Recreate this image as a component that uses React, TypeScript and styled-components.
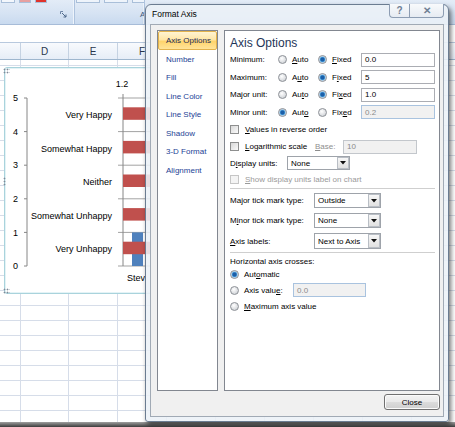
import React from 'react'
import styled, { createGlobalStyle, css } from 'styled-components'

const GlobalStyle = createGlobalStyle`
  html, body { margin: 0; padding: 0; }
  body {
    width: 455px;
    height: 427px;
    overflow: hidden;
    background: #fff;
    font-family: "Liberation Sans", Arial, sans-serif;
  }
  * { box-sizing: border-box; }
`

const Page = styled.div`
  position: relative;
  width: 455px;
  height: 427px;
  overflow: hidden;
  display: flex;
  flex-direction: column;
`

/* ---------- excel sheet behind ---------- */

const Ribbon = styled.div`
  height: 25px;
  flex-shrink: 0;
  display: flex;
  background: linear-gradient(#e3ecf7, #d6e3f3 55%, #c9daef);
  border-bottom: 1px solid #a7bcd8;
`

const RibbonGroup = styled.div<{ $w: number }>`
  width: ${p => p.$w}px;
  flex-shrink: 0;
  display: flex;
  flex-direction: column;
  overflow: hidden;
  border-right: 1px solid #aec3de;
  box-shadow: inset -1px 0 0 #eef4fb;
`

const ButtonTips = styled.div`
  height: 6px;
  display: flex;
  gap: 4px;
  padding: 0 1px;
`

const ButtonTip = styled.div<{ $w: number; $c: string }>`
  width: ${p => p.$w}px;
  height: 3px;
  flex-shrink: 0;
  background: ${p => p.$c};
  border: 1px solid #a9bfd9;
  border-top: none;
`

const GroupLabel = styled.div<{ $align: string; $indent: number }>`
  flex: 1;
  display: flex;
  align-items: center;
  justify-content: ${p => p.$align};
  padding: 0 7px 2px ${p => p.$indent}px;
  font-size: 8px;
  color: #3e5a80;
  white-space: nowrap;
`

const Strip = styled.div`
  height: 18px;
  flex-shrink: 0;
  background: #fff;
  border-bottom: 1px solid #b8c9de;
`

const HeaderRow = styled.div`
  height: 17px;
  flex-shrink: 0;
  display: flex;
  background: linear-gradient(#f8fafd, #e6edf7);
  border-bottom: 1px solid #9eb6ce;
`

const ColHeader = styled.div<{ $w: number }>`
  width: ${p => p.$w}px;
  flex-shrink: 0;
  display: flex;
  align-items: center;
  justify-content: center;
  border-right: 1px solid #c5d2e2;
  font-size: 10px;
  color: #27364b;
`

const Grid = styled.div`
  flex: 1;
  display: flex;
`

const GridColumn = styled.div<{ $w: number }>`
  width: ${p => p.$w}px;
  flex-shrink: 0;
  border-right: 1px solid #d6dde9;
  background-image: linear-gradient(to bottom, transparent 14px, #d6dde9 14px);
  background-size: 100% 15px;
  background-position: 0 -9px;
`

const BottomEdge = styled.div`
  height: 5px;
  flex-shrink: 0;
  background: linear-gradient(#a0a0a0, #3c3c3c);
`

/* ---------- floating chart ---------- */

const ChartFrame = styled.div`
  position: absolute;
  left: 4px;
  top: 67px;
  width: 150px;
  height: 227px;
  background: #fff;
  border: 1px solid #a9d3dc;
  box-shadow: inset 0 0 0 1px #e4f3f6;
  border-radius: 3px;
`

const ChartText = styled.text`
  font-family: "Liberation Sans", Arial, sans-serif;
  font-size: 9px;
  fill: #000;
`

const Handle = styled.span<{ $top: number; $left: number; $w: number; $h: number }>`
  position: absolute;
  top: ${p => p.$top}px;
  left: ${p => p.$left}px;
  width: ${p => p.$w}px;
  height: ${p => p.$h}px;
  background-image: radial-gradient(circle, #7d8a98 0.8px, transparent 1.1px);
  background-size: 3px 3px;
`

/* ---------- dialog ---------- */

const Dialog = styled.div`
  position: absolute;
  left: 145px;
  top: 4px;
  width: 304px;
  height: 418px;
  display: flex;
  flex-direction: column;
  padding: 0 4px 4px 4px;
  border: 1px solid #6b7c91;
  border-radius: 6px 6px 3px 3px;
  background: rgba(236, 241, 247, 0.88);
  box-shadow: 2px 3px 5px rgba(0, 0, 0, 0.55);
  font-size: 8px;
  color: #000;
`

const TitleBar = styled.div`
  height: 19px;
  display: flex;
  align-items: center;
  padding-bottom: 2px;
`

const Title = styled.span`
  margin-left: 2px;
  font-size: 8.5px;
`

const TitleButtons = styled.div`
  margin-left: auto;
  align-self: flex-start;
  margin-top: -1px;
  display: flex;
`

const TitleButton = styled.div<{ $w: number; $first?: boolean }>`
  width: ${p => p.$w}px;
  height: 14px;
  display: flex;
  align-items: center;
  justify-content: center;
  border: 1px solid #8d9db3;
  border-top: none;
  ${p => p.$first ? css`border-right: none; border-radius: 0 0 0 4px;` : css`border-radius: 0 0 4px 0;`}
  background: linear-gradient(#f8fafc, #e6ebf2);
  color: #6f7f95;
  font-size: 10px;
  font-weight: bold;
`

const Client = styled.div`
  flex: 1;
  display: flex;
  flex-direction: column;
  background: #f0f0f0;
  border: 1px solid #a1aab5;
  padding: 5px 3px 6px 6px;
`

const Body = styled.div`
  height: 361px;
  display: flex;
  gap: 6px;
`

const NavList = styled.div`
  width: 61px;
  flex-shrink: 0;
  display: flex;
  flex-direction: column;
  background: #fff;
  border: 1px solid #828790;
`

const NavItem = styled.div<{ $active?: boolean }>`
  height: 18.5px;
  display: flex;
  align-items: center;
  padding-left: 7px;
  border: 1px solid transparent;
  color: #1d3f95;
  white-space: nowrap;
  ${p => p.$active && css`
    height: 19px;
    color: #1b2a55;
    border-color: #e2b24d;
    border-radius: 2px;
    background: linear-gradient(#fff4d3, #ffe6a6 45%, #ffd46c 55%, #ffe49a);
  `}
`

const Panel = styled.div`
  flex: 1;
  display: flex;
  flex-direction: column;
  background: #fff;
  border: 1px solid #828790;
  padding: 5px 4px 0 5px;
`

const Heading = styled.div`
  height: 15px;
  line-height: 15px;
  font-size: 12px;
  color: #1e3558;
`

const AxisRow = styled.div`
  height: 17.5px;
  display: grid;
  grid-template-columns: 48px 40px 43px 74px;
  align-items: center;
`

const Row = styled.div<{ $h: number }>`
  height: ${p => p.$h}px;
  display: flex;
  align-items: center;
`

const FieldLabel = styled.span<{ $w: number; $muted?: boolean }>`
  width: ${p => p.$w}px;
  flex-shrink: 0;
  color: ${p => (p.$muted ? '#8d8d8d' : '#000')};
  white-space: nowrap;
`

const Option = styled.span<{ $w?: number; $gap: number; $muted?: boolean }>`
  display: inline-flex;
  align-items: center;
  gap: ${p => p.$gap}px;
  white-space: nowrap;
  ${p => p.$w && css`width: ${p.$w}px; flex-shrink: 0;`}
  color: ${p => (p.$muted ? '#9a9a9a' : '#000')};
`

const Radio = styled.span<{ $on?: boolean }>`
  width: 9px;
  height: 9px;
  flex-shrink: 0;
  border-radius: 50%;
  border: 1px solid #8c9096;
  background: ${p =>
    p.$on
      ? 'radial-gradient(circle at 50% 50%, #1c5fa8 0 1.6px, #58ace6 2.6px, #dfe6ee 3.3px, #c3c8ce 100%)'
      : 'radial-gradient(circle at 40% 35%, #ffffff, #d3d6da 75%)'};
`

const Check = styled.span<{ $muted?: boolean }>`
  width: 9px;
  height: 9px;
  flex-shrink: 0;
  border: 1px solid ${p => (p.$muted ? '#c6c6c6' : '#8e8f8f')};
  background: ${p => (p.$muted ? '#f4f4f4' : 'linear-gradient(135deg, #d8d8d8, #fbfbfb)')};
`

const TextBox = styled.div<{ $w: number; $off?: boolean; $blue?: boolean }>`
  width: ${p => p.$w}px;
  height: 14px;
  flex-shrink: 0;
  display: flex;
  align-items: center;
  padding-left: 3px;
  border: 1px solid ${p => (p.$blue ? '#a9c3df' : p.$off ? '#c3c7cc' : '#abadb3')};
  background: ${p => (p.$off ? '#f1f1f1' : '#fff')};
  color: ${p => (p.$off ? '#8a8a8a' : '#000')};
`

const Select = styled.div<{ $w: number; $h: number }>`
  width: ${p => p.$w}px;
  height: ${p => p.$h}px;
  flex-shrink: 0;
  display: flex;
  align-items: stretch;
  border: 1px solid #9ea3aa;
  background: #fff;
`

const SelectValue = styled.span`
  flex: 1;
  display: flex;
  align-items: center;
  padding-left: 3px;
`

const DropButton = styled.span`
  width: 12px;
  display: flex;
  align-items: center;
  justify-content: center;
  border: 1px solid #b9bec5;
  background: linear-gradient(#f7f7f7, #e1e1e1);
`

const Divider = styled.div`
  height: 1px;
  margin: 1px 0 2px;
  background: #cfcfcf;
`

const Key = styled.span`
  text-decoration: underline;
`

const Footer = styled.div`
  margin-top: 3px;
  display: flex;
  justify-content: flex-end;
`

const CloseButton = styled.div`
  width: 56px;
  height: 16px;
  display: flex;
  align-items: center;
  justify-content: center;
  border: 1px solid #707070;
  border-radius: 3px;
  background: linear-gradient(#f3f3f3, #e9e9e9 50%, #dcdcdc 51%, #cfcfcf);
  box-shadow: inset 0 0 0 1px #fbfbfb;
`

/* ---------- data ---------- */

// only D, E and F show beside the dialog; the rest sit under it
const columns = [
  { w: 21, l: '' },
  { w: 48, l: 'D' },
  { w: 49, l: 'E' },
  { w: 49, l: 'F' },
  { w: 49, l: '' },
  { w: 49, l: '' },
  { w: 49, l: '' },
  { w: 49, l: '' },
  { w: 49, l: '' },
  { w: 49, l: '' },
]

const navItems = ['Axis Options', 'Number', 'Fill', 'Line Color', 'Line Style', 'Shadow', '3-D Format', 'Alignment']

const categories = ['Very Unhappy', 'Somewhat Unhappy', 'Neither', 'Somewhat Happy', 'Very Happy']

const Y0 = 266
const STEP = 33.6
const yOf = (v: number) => Y0 - v * STEP

const Arrow = () => (
  <svg width="6" height="4" viewBox="0 0 6 4">
    <path d="M0 0 H6 L3 3.5 Z" fill="#111" />
  </svg>
)

const Launcher = () => (
  <svg width="7" height="7" viewBox="0 0 7 7">
    <path d="M0.5 3 V0.5 H3" stroke="#6f86a6" fill="none" />
    <path d="M2 2 L6 6 M6 3.5 V6 H3.5" stroke="#4d6788" fill="none" />
  </svg>
)

const Chart = () => (
  <ChartFrame>
    <svg width={148} height={225} viewBox="5 68 148 225" style={{ display: 'block' }}>
      {[0, 1, 2, 3, 4, 5].map(v => (
        <g key={v}>
          <line x1={24} x2={27} y1={yOf(v)} y2={yOf(v)} stroke="#868686" />
          <line x1={118} x2={153} y1={yOf(v)} y2={yOf(v)} stroke="#a3a3a3" />
          <ChartText x={18} y={yOf(v) + 3.2} textAnchor="end">{v}</ChartText>
        </g>
      ))}
      <line x1={27} x2={27} y1={yOf(5)} y2={Y0} stroke="#868686" />
      <line x1={123} x2={123} y1={94} y2={Y0} stroke="#868686" />
      <ChartText x={122} y={87} textAnchor="middle">1.2</ChartText>
      <rect x={132} y={yOf(1)} width={11} height={STEP} fill="#4f81bd" />
      {categories.map((c, i) => {
        const cy = Y0 - (i + 0.5) * STEP
        return (
          <g key={c}>
            <ChartText x={112} y={cy + 3.2} textAnchor="end">{c}</ChartText>
            <rect x={123} y={cy - 7.5} width={30} height={12.5} fill="#c0504d" />
          </g>
        )
      })}
      <ChartText x={127} y={281}>Stev</ChartText>
    </svg>
  </ChartFrame>
)

const FormatAxisDialog = () => (
  <Dialog>
    <TitleBar>
      <Title>Format Axis</Title>
      <TitleButtons>
        <TitleButton $w={20} $first>?</TitleButton>
        <TitleButton $w={35}>✕</TitleButton>
      </TitleButtons>
    </TitleBar>
    <Client>
      <Body>
        <NavList>
          {navItems.map((n, i) => (
            <NavItem key={n} $active={i === 0}>{n}</NavItem>
          ))}
        </NavList>
        <Panel>
          <Heading>Axis Options</Heading>
          <AxisRow>
            <span>Minimum:</span>
            <Option $gap={5}><Radio /><span><Key>A</Key>uto</span></Option>
            <Option $gap={5}><Radio $on /><span><Key>F</Key>ixed</span></Option>
            <TextBox $w={74}>0.0</TextBox>
          </AxisRow>
          <AxisRow>
            <span>Maximum:</span>
            <Option $gap={5}><Radio /><span>A<Key>u</Key>to</span></Option>
            <Option $gap={5}><Radio $on /><span>F<Key>i</Key>xed</span></Option>
            <TextBox $w={74}>5</TextBox>
          </AxisRow>
          <AxisRow>
            <span>Major unit:</span>
            <Option $gap={5}><Radio /><span>Au<Key>t</Key>o</span></Option>
            <Option $gap={5}><Radio $on /><span>Fi<Key>x</Key>ed</span></Option>
            <TextBox $w={74}>1.0</TextBox>
          </AxisRow>
          <AxisRow>
            <span>Minor unit:</span>
            <Option $gap={5}><Radio $on /><span>Aut<Key>o</Key></span></Option>
            <Option $gap={5}><Radio /><span>Fix<Key>e</Key>d</span></Option>
            <TextBox $w={74} $off $blue>0.2</TextBox>
          </AxisRow>
          <Row $h={17}>
            <Option $gap={6}><Check /><span><Key>V</Key>alues in reverse order</span></Option>
          </Row>
          <Row $h={17}>
            <Option $gap={6} $w={85}><Check /><span><Key>L</Key>ogarithmic scale</span></Option>
            <FieldLabel $w={28} $muted><Key>B</Key>ase:</FieldLabel>
            <TextBox $w={74} $off>10</TextBox>
          </Row>
          <Row $h={16}>
            <FieldLabel $w={57}>D<Key>i</Key>splay units:</FieldLabel>
            <Select $w={63} $h={14}>
              <SelectValue>None</SelectValue>
              <DropButton><Arrow /></DropButton>
            </Select>
          </Row>
          <Row $h={16}>
            <Option $gap={6} $muted><Check $muted /><span><Key>S</Key>how display units label on chart</span></Option>
          </Row>
          <Divider />
          <Row $h={19}>
            <FieldLabel $w={84}>Ma<Key>j</Key>or tick mark type:</FieldLabel>
            <Select $w={67} $h={15}>
              <SelectValue>Outside</SelectValue>
              <DropButton><Arrow /></DropButton>
            </Select>
          </Row>
          <Row $h={21}>
            <FieldLabel $w={84}>M<Key>i</Key>nor tick mark type:</FieldLabel>
            <Select $w={67} $h={15}>
              <SelectValue>None</SelectValue>
              <DropButton><Arrow /></DropButton>
            </Select>
          </Row>
          <Row $h={20}>
            <FieldLabel $w={84}><Key>A</Key>xis labels:</FieldLabel>
            <Select $w={67} $h={16}>
              <SelectValue>Next to Axis</SelectValue>
              <DropButton><Arrow /></DropButton>
            </Select>
          </Row>
          <Divider />
          <Row $h={12}>
            <span>Horizontal axis crosses:</span>
          </Row>
          <Row $h={15}>
            <Option $gap={5}><Radio $on /><span>Aut<Key>o</Key>matic</span></Option>
          </Row>
          <Row $h={16}>
            <Option $gap={5} $w={63}><Radio /><span>Axis valu<Key>e</Key>:</span></Option>
            <TextBox $w={73} $off $blue>0.0</TextBox>
          </Row>
          <Row $h={16}>
            <Option $gap={5}><Radio /><span><Key>M</Key>aximum axis value</span></Option>
          </Row>
        </Panel>
      </Body>
      <Footer>
        <CloseButton>Close</CloseButton>
      </Footer>
    </Client>
  </Dialog>
)

const App = () => (
  <Page>
    <GlobalStyle />
    <Ribbon>
      <RibbonGroup $w={75}>
        <ButtonTips>
          <ButtonTip $w={14} $c="#f3f7fc" />
          <ButtonTip $w={12} $c="#e7a0a0" />
          <ButtonTip $w={12} $c="#e0342c" />
        </ButtonTips>
        <GroupLabel $align="flex-end" $indent={7}><Launcher /></GroupLabel>
      </RibbonGroup>
      <RibbonGroup $w={70}>
        <ButtonTips>
          <ButtonTip $w={24} $c="#eef4fb" />
          <ButtonTip $w={24} $c="#eef4fb" />
          <ButtonTip $w={16} $c="#eef4fb" />
        </ButtonTips>
        <GroupLabel $align="flex-start" $indent={65}>A</GroupLabel>
      </RibbonGroup>
    </Ribbon>
    <Strip />
    <HeaderRow>
      {columns.map((c, i) => (
        <ColHeader key={i} $w={c.w}>{c.l}</ColHeader>
      ))}
    </HeaderRow>
    <Grid>
      {columns.map((c, i) => (
        <GridColumn key={i} $w={c.w} />
      ))}
    </Grid>
    <BottomEdge />
    <Chart />
    <Handle $top={68} $left={3} $w={7} $h={6} />
    <Handle $top={177} $left={3} $w={3} $h={9} />
    <Handle $top={288} $left={3} $w={7} $h={6} />
    <FormatAxisDialog />
  </Page>
)

export default App
